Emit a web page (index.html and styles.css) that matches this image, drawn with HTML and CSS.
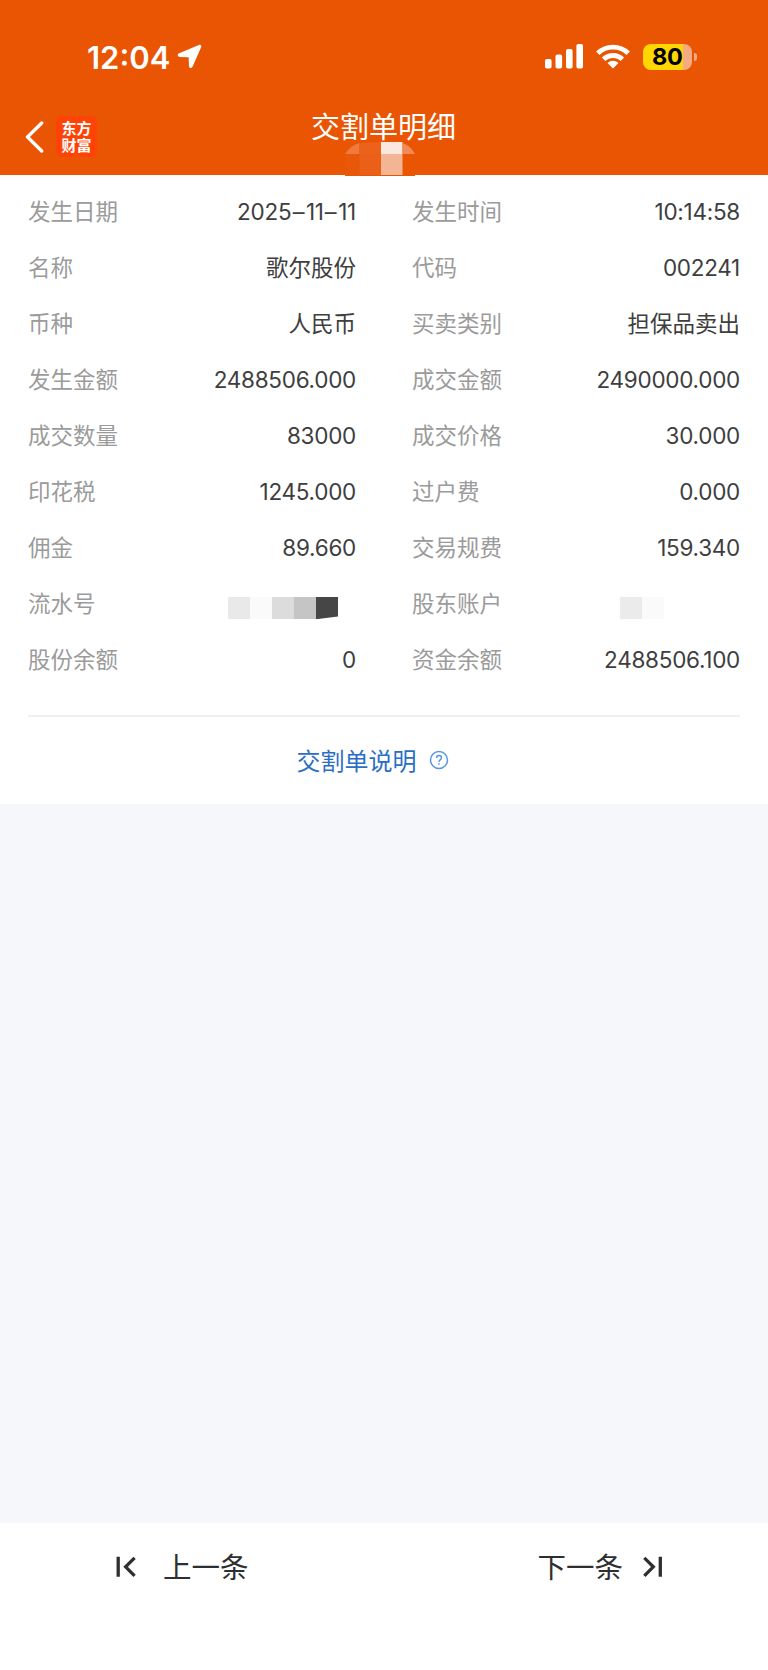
FILE: index.html
```html
<!DOCTYPE html>
<html lang="zh-CN">
<head>
<meta charset="utf-8">
<title>交割单明细</title>
<link rel="stylesheet" href="styles.css">
</head>
<body>
<div class="app">
  <header class="header">
    <div class="status">
      <div class="status-left">
        <span class="time">12:04</span>
        <svg class="locate" width="25" height="25" viewBox="0 0 25 25"><path d="M22.8 1.6 L1.9 10.3 Q1 11.4 2.3 12.1 L12.4 12.4 L12.8 22.4 Q13.6 24 14.7 22.6 L23.5 2.6 Q23.6 1.4 22.8 1.6Z" fill="#fff" stroke="#fff" stroke-width="1.6" stroke-linejoin="round"/></svg>
      </div>
      <div class="status-right">
        <svg class="signal" width="39" height="25" viewBox="0 0 39 25" fill="#fff"><rect x="0" y="15" width="6.6" height="9.5" rx="1.8"/><rect x="10.5" y="10.5" width="6.6" height="14" rx="1.8"/><rect x="21" y="5" width="6.6" height="19.5" rx="1.8"/><rect x="31.4" y="0" width="6.6" height="24.5" rx="1.8"/></svg>
        <svg class="wifi" width="34" height="25" viewBox="0 0 34 25"><g fill="none" stroke="#fff" stroke-width="4.9"><path d="M1.8 9.3 A21.8 21.8 0 0 1 32.2 9.3"/><path d="M7.6 15.300 A13.4 13.4 0 0 1 26.4 15.300"/></g><path d="M17 24.5 L11.5 19 A8 8 0 0 1 22.5 19Z" fill="#fff"/></svg>
        <div class="battery"><span>80</span></div>
        <i class="nub"></i>
      </div>
    </div>
    <div class="nav">
      <svg class="back" width="20" height="32" viewBox="0 0 20 32"><path d="M16.7 2 L2.5 16 L16.7 30" fill="none" stroke="#fff" stroke-width="3.300" stroke-linecap="round" stroke-linejoin="round"/></svg>
      <div class="logo"><span>东方</span><span>财富</span></div>
      <h1 class="title">交割单明细</h1>
      <svg class="blur-title" width="70" height="34" viewBox="0 0 70 34"><path d="M0 12 Q6 1 17 0 H53 Q64 1 70 12 V34 H0Z" fill="#e95503"/><path d="M0 12 Q6 3 14.500 1 V12Z" fill="#ef7a3c"/><path d="M14.500 12 V1 L36 0 V12Z" fill="#ec621a"/><path d="M0 12 H14.500 V34 H0Z" fill="#e95808"/><path d="M14.500 12 H36 V33 H14.500Z" fill="#eb6018"/><path d="M36 0 H57.500 V12 H36Z" fill="#fce7de"/><path d="M57.500 1 Q66 4 70 12 H57.500Z" fill="#f08a56"/><path d="M36 12 H57.500 V33 H36Z" fill="#f4b595"/></svg>
    </div>
  </header>
  <main class="panel">
    <dl class="grid">
      <div class="row"><dt>发生日期</dt><dd class="num">2025<span class="dash">–</span>11<span class="dash">–</span>11</dd></div><div class="row"><dt>发生时间</dt><dd class="num">10:14:58</dd></div>
      <div class="row"><dt>名称</dt><dd>歌尔股份</dd></div><div class="row"><dt>代码</dt><dd class="num">002241</dd></div>
      <div class="row"><dt>币种</dt><dd>人民币</dd></div><div class="row"><dt>买卖类别</dt><dd>担保品卖出</dd></div>
      <div class="row"><dt>发生金额</dt><dd class="num">2488506.000</dd></div><div class="row"><dt>成交金额</dt><dd class="num">2490000.000</dd></div>
      <div class="row"><dt>成交数量</dt><dd class="num">83000</dd></div><div class="row"><dt>成交价格</dt><dd class="num">30.000</dd></div>
      <div class="row"><dt>印花税</dt><dd class="num">1245.000</dd></div><div class="row"><dt>过户费</dt><dd class="num">0.000</dd></div>
      <div class="row"><dt>佣金</dt><dd class="num">89.660</dd></div><div class="row"><dt>交易规费</dt><dd class="num">159.340</dd></div>
      <div class="row"><dt>流水号</dt><dd class="mask mask-serial"><svg width="110" height="22" viewBox="0 0 110 22"><path d="M0 0H22V22H0Z" fill="#e9e9e9"/><path d="M22 0H44V22H22Z" fill="#fafafa"/><path d="M44 0H66V22H44Z" fill="#dcdcdc"/><path d="M66 0H88V22H66Z" fill="#c5c5c5"/><path d="M88 0H110V19.500L90 22H88Z" fill="#464646"/></svg></dd></div><div class="row"><dt>股东账户</dt><dd class="mask mask-account"><svg width="44" height="22" viewBox="0 0 44 22"><path d="M0 0H22V22H0Z" fill="#ebebeb"/><path d="M22 0H44V22H22Z" fill="#fafafa"/></svg></dd></div>
      <div class="row"><dt>股份余额</dt><dd class="num">0</dd></div><div class="row"><dt>资金余额</dt><dd class="num">2488506.100</dd></div>
    </dl>
    <div class="help">
      <span>交割单说明</span>
      <svg width="20" height="20" viewBox="0 0 20 20" fill="none" stroke="#5796e3" stroke-width="1.5"><circle cx="10" cy="10" r="8.500"/><path d="M7.500 8.100 Q7.500 5.500 10 5.500 Q12.500 5.500 12.500 7.800 Q12.500 9 11.200 9.900 Q10 10.700 10 12"/><path d="M10 13.200V14.800"/></svg>
    </div>
  </main>
  <footer class="footer">
    <div class="pager prev"><svg width="20" height="22" viewBox="0 0 20 22" fill="none" stroke="#2e2f31" stroke-width="3.300"><path d="M2.200 .8V20.800M18.600 1.800L9.600 10.800L18.600 19.800"/></svg><span>上一条</span></div>
    <div class="pager next"><span>下一条</span><svg width="20" height="22" viewBox="0 0 20 22" fill="none" stroke="#2e2f31" stroke-width="3.300"><path d="M17.300 .8V20.800M1.300 1.800L10.300 10.800L1.300 19.800"/></svg></div>
  </footer>
</div>
</body>
</html>
```
FILE: styles.css
```css
* { box-sizing: border-box; }
body { margin: 0; font-family: Inter, "Noto Sans CJK SC", sans-serif; background: #f6f7fa; }
.app { width: 768px; height: 1670px; display: flex; flex-direction: column; }
svg { display: block; flex: none; }

.header { height: 175px; background: #e95503; color: #fff; flex: none; }
.status { height: 98px; display: flex; justify-content: space-between; padding: 43px 71px 0 87px; }
.status-left, .status-right { display: flex; height: 27px; align-items: center; }
.time { font-size: 31px; font-weight: 600; line-height: 27px; width: 89px; white-space: nowrap; padding-top: 1px; }
.locate { margin-left: 1px; }
.signal { margin-right: -1px; }
.wifi { margin-left: 13px; }
.battery { width: 49px; height: 26px; border-radius: 8px; margin-left: 13px; background: linear-gradient(90deg, #fed702 0 40px, #f4aa82 40px); color: #000; font-size: 23.5px; font-weight: 650; line-height: 26px; padding-left: 9px; letter-spacing: -0.4px; }
.nub { width: 3px; height: 8px; margin-left: 2px; border-radius: 0 3px 3px 0; background: #f4aa82; }

.nav { position: relative; height: 77px; display: flex; padding: 18px 0 0 25px; }
.back { margin-top: 5px; }
.logo { width: 41px; height: 41px; margin-left: 11px; border-radius: 6px; background: #ff4205; display: flex; flex-direction: column; align-items: center; padding-top: 4px; font-size: 15px; line-height: 17px; font-weight: 700; }
.title { position: absolute; left: 0; right: 1px; top: 9px; margin: 0; text-align: center; font-size: 29px; line-height: 42px; font-weight: 400; }
.blur-title { position: absolute; left: 345px; top: 44px; }

.panel { height: 629px; background: #fff; padding: 9px 28px 0; flex: none; }
.grid { margin: 0; display: grid; grid-template-columns: 328px 328px; column-gap: 56px; grid-auto-rows: 56px; height: 533px; border-bottom: 2px solid #f0f0f1; }
.row { display: flex; justify-content: space-between; font-size: 22.5px; line-height: 56px; }
dt { color: #9b9b9b; }
dd { margin: 0; color: #3e3e3e; }
.num { letter-spacing: -0.27px; }
.dash { display: inline-block; transform: scaleX(1.05); margin: 0 1.8px; }
.mask { padding-top: 21px; }
.mask-serial { margin-right: 18px; }
.mask-account { margin-right: 76px; }
.help { display: flex; justify-content: center; align-items: center; gap: 12px; height: 87px; padding-right: 23px; color: #2b6fc4; font-size: 24px; }
.help span { padding-bottom: 3px; }
.help svg { margin-top: -1px; }

.footer { margin-top: auto; height: 147px; background: #fff; color: #2e2f31; display: flex; justify-content: space-between; padding: 23px 105px 0 116px; font-size: 28.5px; line-height: 42px; }
.pager { display: flex; height: 42px; align-items: center; }
.pager span { padding-top: 2px; }
.prev { gap: 27px; }
.next { gap: 20px; }
```
